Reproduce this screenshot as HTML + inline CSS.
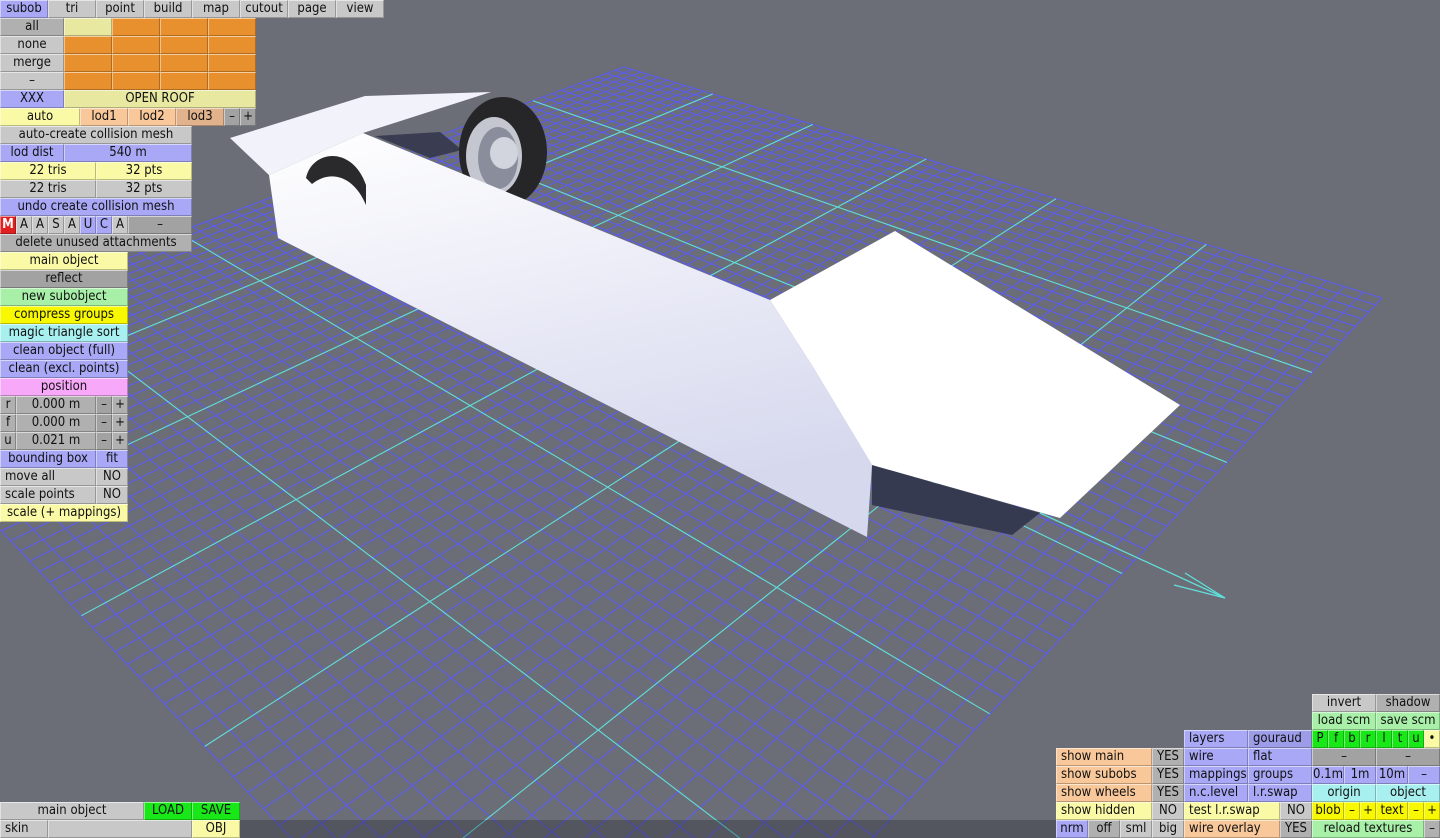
<!DOCTYPE html>
<html><head><meta charset="utf-8"><style>
html,body{margin:0;width:1440px;height:838px;overflow:hidden}
body{background:#6b6d77;position:relative;font-family:"DejaVu Sans Condensed","DejaVu Sans","Liberation Sans",sans-serif;}
svg{position:absolute;left:0;top:0}
.b{position:absolute;height:18px;box-sizing:border-box;border-top:1px solid rgba(255,255,255,.55);border-left:1px solid rgba(255,255,255,.45);border-bottom:1px solid rgba(0,0,0,.25);border-right:1px solid rgba(0,0,0,.25);font-size:13px;line-height:16px;text-align:center;color:#111;white-space:nowrap;overflow:hidden}
.l{text-align:left;padding-left:4px}
.g{background:#c8c8c8}.dg{background:#a2a2a2}.o{background:#e8902e}.y{background:#e8e8a0}.ly{background:#fafaa6}
.bl{background:#a8a8f6}.bl2{background:#9c9ce8}.pe{background:#f8c89a}.pe2{background:#e2b28c}.gr{background:#a8f0a8}
.yy{background:#f8f800}.cy{background:#a8f0f0}.pk{background:#f8a8f8}.bg{background:#18e818}.r{background:#e02020;color:#fff;font-weight:bold}
.ag{background:#b0b0b0}
</style></head><body>
<svg width="1440" height="838" viewBox="0 0 1440 838" id="s">
<defs><linearGradient id="bd" x1="0" y1="0" x2="0.3" y2="1"><stop offset="0" stop-color="#ffffff"/><stop offset="1" stop-color="#d6d8ee"/></linearGradient></defs>
<g id="grid" stroke-width="1.1"></g>
<polyline points="1040,513 1225,598" stroke="#60e0dc" stroke-width="1.3" fill="none"/>
<polyline points="1185,573 1225,598 1174,585" stroke="#60e0dc" stroke-width="1.3" fill="none"/>
<polygon points="872,465 872,505 1012,535 1040,513" fill="#363a50"/>
<polygon points="375,136 440,132 462,150 430,158" fill="#3a3d52"/>
<ellipse cx="503" cy="152" rx="44" ry="55" fill="#262628"/>
<ellipse cx="494" cy="156" rx="28" ry="39" fill="#c4c6d0"/>
<ellipse cx="498" cy="158" rx="20" ry="31" fill="#8a8e9c"/>
<ellipse cx="504" cy="153" rx="14" ry="16" fill="#d2d4de"/>
<polygon points="230,138 365,96 491,92 363,133 269,175" fill="#f2f2fa"/>
<polygon points="269,175 363,133 770,300 813,367 872,465 867,537 278,238" fill="url(#bd)"/>
<polygon points="770,300 895,231 1180,405 1060,518 872,465 813,367" fill="#ffffff"/>
<path d="M306,178 C312,150 352,145 366,185 L366,205 C355,178 332,168 312,184 Z" fill="#2a2a2c"/>
<rect x="240" y="820" width="816" height="18" fill="rgba(30,30,40,0.3)"/>
</svg>
<script>
(function(){var A=[624,67],B=[1382,298],C=[582,1146],D=[-162,358];
var x0=A[0],y0=A[1],x1=B[0],y1=B[1],x2=C[0],y2=C[1],x3=D[0],y3=D[1];
var dx1=x1-x2,dx2=x3-x2,dx3=x0-x1+x2-x3,dy1=y1-y2,dy2=y3-y2,dy3=y0-y1+y2-y3;
var den=dx1*dy2-dx2*dy1,g=(dx3*dy2-dx2*dy3)/den,h=(dx1*dy3-dx3*dy1)/den;
var a=x1-x0+g*x1,b=x3-x0+h*x3,c=x0,d=y1-y0+g*y1,e=y3-y0+h*y3,f=y0;
function m(u,v){var w=g*u+h*v+1;return [(a*u+b*v+c)/w,(d*u+e*v+f)/w];}
var N=60,s='',s2='';
for(var i=0;i<=N;i++){var t=i/N;var p=m(t,0),q=m(t,1),r=m(0,t),k=m(1,t);
var cy=(i%10==0&&i>0&&i<N);
var l1='<line x1="'+p[0]+'" y1="'+p[1]+'" x2="'+q[0]+'" y2="'+q[1]+'" stroke="'+(cy?'#60e0dc':'#5c5cee')+'"/>';
var l2='<line x1="'+r[0]+'" y1="'+r[1]+'" x2="'+k[0]+'" y2="'+k[1]+'" stroke="'+(cy?'#60e0dc':'#5c5cee')+'"/>';
if(cy)s2+=l1+l2;else s+=l1+l2;}
document.getElementById('grid').innerHTML=s+s2;})();
</script>

<div class="b bl" style="left:0;top:0;width:48px">subob</div>
<div class="b g" style="left:48px;top:0;width:48px">tri</div>
<div class="b g" style="left:96px;top:0;width:48px">point</div>
<div class="b g" style="left:144px;top:0;width:48px">build</div>
<div class="b g" style="left:192px;top:0;width:48px">map</div>
<div class="b g" style="left:240px;top:0;width:48px">cutout</div>
<div class="b g" style="left:288px;top:0;width:48px">page</div>
<div class="b g" style="left:336px;top:0;width:48px">view</div>

<div class="b ag" style="left:0;top:18px;width:64px">all</div>
<div class="b y" style="left:64px;top:18px;width:48px"></div>
<div class="b o" style="left:112px;top:18px;width:48px"></div><div class="b o" style="left:160px;top:18px;width:48px"></div><div class="b o" style="left:208px;top:18px;width:48px"></div>
<div class="b g" style="left:0;top:36px;width:64px">none</div>
<div class="b o" style="left:64px;top:36px;width:48px"></div><div class="b o" style="left:112px;top:36px;width:48px"></div><div class="b o" style="left:160px;top:36px;width:48px"></div><div class="b o" style="left:208px;top:36px;width:48px"></div>
<div class="b g" style="left:0;top:54px;width:64px">merge</div>
<div class="b o" style="left:64px;top:54px;width:48px"></div><div class="b o" style="left:112px;top:54px;width:48px"></div><div class="b o" style="left:160px;top:54px;width:48px"></div><div class="b o" style="left:208px;top:54px;width:48px"></div>
<div class="b g" style="left:0;top:72px;width:64px">–</div>
<div class="b o" style="left:64px;top:72px;width:48px"></div><div class="b o" style="left:112px;top:72px;width:48px"></div><div class="b o" style="left:160px;top:72px;width:48px"></div><div class="b o" style="left:208px;top:72px;width:48px"></div>
<div class="b bl" style="left:0;top:90px;width:64px">XXX</div>
<div class="b y" style="left:64px;top:90px;width:192px">OPEN ROOF</div>
<div class="b ly" style="left:0;top:108px;width:80px">auto</div>
<div class="b pe" style="left:80px;top:108px;width:48px">lod1</div>
<div class="b pe" style="left:128px;top:108px;width:48px">lod2</div>
<div class="b pe2" style="left:176px;top:108px;width:48px">lod3</div>
<div class="b dg" style="left:224px;top:108px;width:16px">–</div>
<div class="b dg" style="left:240px;top:108px;width:16px">+</div>
<div class="b g" style="left:0;top:126px;width:192px">auto-create collision mesh</div>
<div class="b bl" style="left:0;top:144px;width:64px">lod dist</div>
<div class="b bl" style="left:64px;top:144px;width:128px">540 m</div>
<div class="b ly" style="left:0;top:162px;width:96px">22 tris</div>
<div class="b ly" style="left:96px;top:162px;width:96px">32 pts</div>
<div class="b g" style="left:0;top:180px;width:96px">22 tris</div>
<div class="b g" style="left:96px;top:180px;width:96px">32 pts</div>
<div class="b bl" style="left:0;top:198px;width:192px">undo create collision mesh</div>
<div class="b r" style="left:0;top:216px;width:16px">M</div>
<div class="b g" style="left:16px;top:216px;width:16px">A</div>
<div class="b g" style="left:32px;top:216px;width:16px">A</div>
<div class="b g" style="left:48px;top:216px;width:16px">S</div>
<div class="b g" style="left:64px;top:216px;width:16px">A</div>
<div class="b bl" style="left:80px;top:216px;width:16px">U</div>
<div class="b bl" style="left:96px;top:216px;width:16px">C</div>
<div class="b g" style="left:112px;top:216px;width:16px">A</div>
<div class="b dg" style="left:128px;top:216px;width:64px">–</div>
<div class="b ag" style="left:0;top:234px;width:192px">delete unused attachments</div>
<div class="b ly" style="left:0;top:252px;width:128px">main object</div>
<div class="b dg" style="left:0;top:270px;width:128px">reflect</div>
<div class="b gr" style="left:0;top:288px;width:128px">new subobject</div>
<div class="b yy" style="left:0;top:306px;width:128px">compress groups</div>
<div class="b cy" style="left:0;top:324px;width:128px">magic triangle sort</div>
<div class="b bl" style="left:0;top:342px;width:128px">clean object (full)</div>
<div class="b bl" style="left:0;top:360px;width:128px">clean (excl. points)</div>
<div class="b pk" style="left:0;top:378px;width:128px">position</div>
<div class="b ag" style="left:0;top:396px;width:16px">r</div><div class="b ag" style="left:16px;top:396px;width:80px">0.000 m</div><div class="b dg" style="left:96px;top:396px;width:16px">–</div><div class="b ag" style="left:112px;top:396px;width:16px">+</div>
<div class="b ag" style="left:0;top:414px;width:16px">f</div><div class="b ag" style="left:16px;top:414px;width:80px">0.000 m</div><div class="b dg" style="left:96px;top:414px;width:16px">–</div><div class="b ag" style="left:112px;top:414px;width:16px">+</div>
<div class="b ag" style="left:0;top:432px;width:16px">u</div><div class="b ag" style="left:16px;top:432px;width:80px">0.021 m</div><div class="b dg" style="left:96px;top:432px;width:16px">–</div><div class="b ag" style="left:112px;top:432px;width:16px">+</div>
<div class="b bl" style="left:0;top:450px;width:96px">bounding box</div><div class="b bl" style="left:96px;top:450px;width:32px">fit</div>
<div class="b g l" style="left:0;top:468px;width:96px">move all</div><div class="b g" style="left:96px;top:468px;width:32px">NO</div>
<div class="b g l" style="left:0;top:486px;width:96px">scale points</div><div class="b g" style="left:96px;top:486px;width:32px">NO</div>
<div class="b ly" style="left:0;top:504px;width:128px">scale (+ mappings)</div>

<div class="b g" style="left:0;top:802px;width:144px">main object</div>
<div class="b bg" style="left:144px;top:802px;width:48px">LOAD</div>
<div class="b bg" style="left:192px;top:802px;width:48px">SAVE</div>
<div class="b g l" style="left:0;top:820px;width:48px">skin</div>
<div class="b g" style="left:48px;top:820px;width:144px"></div>
<div class="b ly" style="left:192px;top:820px;width:48px">OBJ</div>

<div class="b g" style="left:1312px;top:694px;width:64px">invert</div>
<div class="b ag" style="left:1376px;top:694px;width:64px">shadow</div>
<div class="b gr" style="left:1312px;top:712px;width:64px">load scm</div>
<div class="b gr" style="left:1376px;top:712px;width:64px">save scm</div>
<div class="b bl l" style="left:1184px;top:730px;width:64px">layers</div>
<div class="b bl2 l" style="left:1248px;top:730px;width:64px">gouraud</div>
<div class="b bg" style="left:1312px;top:730px;width:16px">P</div>
<div class="b bg" style="left:1328px;top:730px;width:16px">f</div>
<div class="b bg" style="left:1344px;top:730px;width:16px">b</div>
<div class="b bg" style="left:1360px;top:730px;width:16px">r</div>
<div class="b bg" style="left:1376px;top:730px;width:16px">l</div>
<div class="b bg" style="left:1392px;top:730px;width:16px">t</div>
<div class="b bg" style="left:1408px;top:730px;width:16px">u</div>
<div class="b ly" style="left:1424px;top:730px;width:16px">•</div>
<div class="b pe l" style="left:1056px;top:748px;width:96px">show main</div>
<div class="b ag" style="left:1152px;top:748px;width:32px">YES</div>
<div class="b bl l" style="left:1184px;top:748px;width:64px">wire</div>
<div class="b bl l" style="left:1248px;top:748px;width:64px">flat</div>
<div class="b dg" style="left:1312px;top:748px;width:64px">–</div>
<div class="b dg" style="left:1376px;top:748px;width:64px">–</div>
<div class="b pe l" style="left:1056px;top:766px;width:96px">show subobs</div>
<div class="b ag" style="left:1152px;top:766px;width:32px">YES</div>
<div class="b bl l" style="left:1184px;top:766px;width:64px">mappings</div>
<div class="b bl l" style="left:1248px;top:766px;width:64px">groups</div>
<div class="b bl" style="left:1312px;top:766px;width:32px">0.1m</div>
<div class="b bl" style="left:1344px;top:766px;width:32px">1m</div>
<div class="b bl" style="left:1376px;top:766px;width:32px">10m</div>
<div class="b bl" style="left:1408px;top:766px;width:32px">–</div>
<div class="b pe l" style="left:1056px;top:784px;width:96px">show wheels</div>
<div class="b ag" style="left:1152px;top:784px;width:32px">YES</div>
<div class="b bl l" style="left:1184px;top:784px;width:64px">n.c.level</div>
<div class="b bl l" style="left:1248px;top:784px;width:64px">l.r.swap</div>
<div class="b cy" style="left:1312px;top:784px;width:64px">origin</div>
<div class="b cy" style="left:1376px;top:784px;width:64px">object</div>
<div class="b ly l" style="left:1056px;top:802px;width:96px">show hidden</div>
<div class="b g" style="left:1152px;top:802px;width:32px">NO</div>
<div class="b ly l" style="left:1184px;top:802px;width:96px">test l.r.swap</div>
<div class="b g" style="left:1280px;top:802px;width:32px">NO</div>
<div class="b yy" style="left:1312px;top:802px;width:32px">blob</div>
<div class="b yy" style="left:1344px;top:802px;width:16px">–</div>
<div class="b yy" style="left:1360px;top:802px;width:16px">+</div>
<div class="b yy" style="left:1376px;top:802px;width:32px">text</div>
<div class="b yy" style="left:1408px;top:802px;width:16px">–</div>
<div class="b yy" style="left:1424px;top:802px;width:16px">+</div>
<div class="b bl" style="left:1056px;top:820px;width:32px">nrm</div>
<div class="b ag" style="left:1088px;top:820px;width:32px">off</div>
<div class="b g" style="left:1120px;top:820px;width:32px">sml</div>
<div class="b g" style="left:1152px;top:820px;width:32px">big</div>
<div class="b pe l" style="left:1184px;top:820px;width:96px">wire overlay</div>
<div class="b ag" style="left:1280px;top:820px;width:32px">YES</div>
<div class="b gr" style="left:1312px;top:820px;width:112px">reload textures</div>
<div class="b ag" style="left:1424px;top:820px;width:16px">–</div>
</body></html>
